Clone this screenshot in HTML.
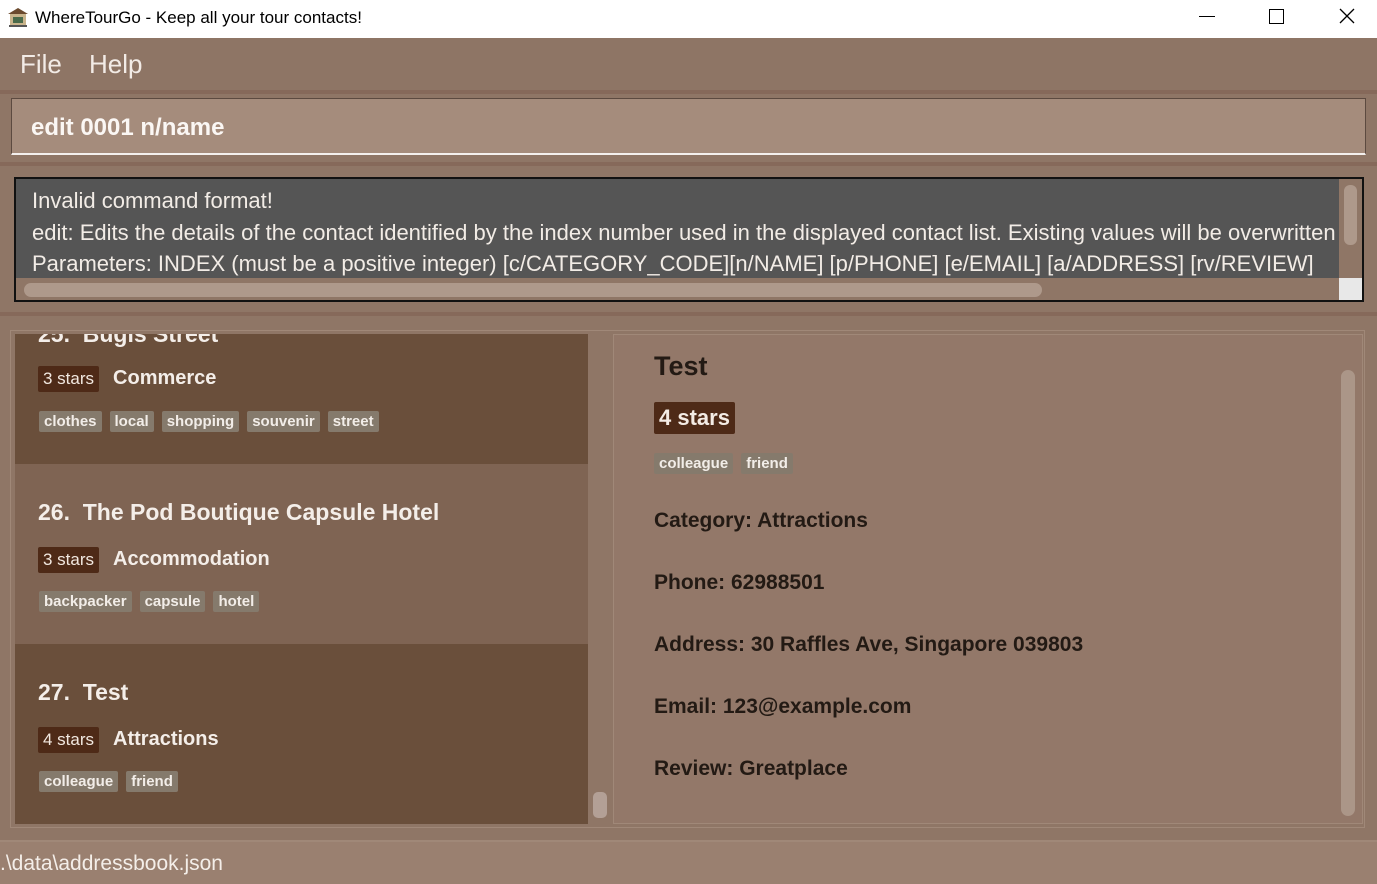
<!DOCTYPE html>
<html><head><meta charset="utf-8"><style>
*{margin:0;padding:0;box-sizing:border-box}
body{width:1377px;height:884px;overflow:hidden;background:#8f7666;font-family:"Liberation Sans",sans-serif;position:relative}
.abs{position:absolute}
.title{left:0;top:0;width:1377px;height:38px;background:#fff;color:#000;font-size:17px}
.menu{top:38px;left:0;width:1377px;height:52px;background:#8e7565;color:#f2ebe6;font-size:26px;font-weight:300}
.tag{display:inline-block;background:#857a6c;color:#f2ede8;font-size:15px;font-weight:bold;padding:2px 5px;border-radius:2px;margin-right:8px}
.star{display:inline-block;background:#4e2a17;color:#f2e8e0;font-size:17px;padding:3px 5px;border-radius:2px;margin-right:14px}
.card{left:15px;width:573px;color:#f4eee9}
.card .h{font-size:23px;font-weight:bold;position:absolute;left:23px}
.cat{font-size:20px;font-weight:bold}
.det{color:#231a14;font-size:21px;font-weight:bold;position:absolute;left:654px}
</style></head><body>
<div class="abs title">
<svg class="abs" style="left:7px;top:6px" width="22" height="22" viewBox="0 0 22 22"><path d="M1 8 L11 2 L21 8 Z" fill="#6b4a2e"/><rect x="3" y="8" width="16" height="11" fill="#c9b48c"/><rect x="6" y="11" width="10" height="6" fill="#4a6a4a"/><rect x="2" y="19" width="18" height="2" fill="#555"/></svg>
<span class="abs" style="left:35px;top:8px">WhereTourGo - Keep all your tour contacts!</span>
<span class="abs" style="left:1199px;top:16px;width:16px;height:1px;background:#000"></span>
<span class="abs" style="left:1269px;top:9px;width:15px;height:15px;border:1.5px solid #000"></span>
<svg class="abs" style="left:1339px;top:8px" width="16" height="16" viewBox="0 0 16 16"><path d="M1 1L15 15M15 1L1 15" stroke="#000" stroke-width="1.3"/></svg>
</div>
<div class="abs menu"><span class="abs" style="left:20px;top:11px">File</span><span class="abs" style="left:89px;top:11px">Help</span></div>
<div class="abs" style="left:0;top:90px;width:1377px;height:4px;background:#86695a"></div>
<div class="abs" style="left:11px;top:98px;width:1355px;height:57px;background:#a58c7c;border:1px solid #5c4a40;border-bottom:2px solid #f4f0ee"></div>
<span class="abs" style="left:31px;top:114px;font-size:24px;font-weight:bold;color:#fbf7f4">edit 0001 n/name</span>
<div class="abs" style="left:0;top:162px;width:1377px;height:4px;background:#86695a"></div>
<div class="abs" style="left:14px;top:177px;width:1350px;height:125px;background:#555;border:2px solid #111;overflow:hidden">
<div style="color:#f2ece6;font-size:22px;font-weight:300;line-height:31.5px;white-space:nowrap;padding:6px 0 0 16px;width:1322px;overflow:hidden">Invalid command format!<br>edit: Edits the details of the contact identified by the index number used in the displayed contact list. Existing values will be overwritten<br>Parameters: INDEX (must be a positive integer) [c/CATEGORY_CODE][n/NAME] [p/PHONE] [e/EMAIL] [a/ADDRESS] [rv/REVIEW]</div>
<div class="abs" style="left:0;top:99px;width:1323px;height:22px;background:#8f7666"></div>
<div class="abs" style="left:8px;top:104px;width:1018px;height:14px;background:#ae998b;border-radius:7px"></div>
<div class="abs" style="left:1323px;top:0;width:23px;height:99px;background:#8f7666"></div>
<div class="abs" style="left:1328px;top:6px;width:13px;height:60px;background:#ae998b;border-radius:6px"></div>
<div class="abs" style="left:1323px;top:99px;width:23px;height:22px;background:#e8e8e8"></div>
</div>
<div class="abs" style="left:0;top:312px;width:1377px;height:4px;background:#86695a"></div>
<div class="abs" style="left:10px;top:330px;width:1355px;height:498px;border:1px solid #a08878"></div>
<!-- list -->
<div class="abs card" style="top:334px;height:130px;background:#6a4f3b;overflow:hidden">
<div class="h" style="top:-13px">25.&nbsp; Bugis Street</div>
<div class="abs" style="left:23px;top:32px"><span class="star">3 stars</span><span class="cat">Commerce</span></div>
<div class="abs" style="left:24px;top:77px"><span class="tag">clothes</span><span class="tag">local</span><span class="tag">shopping</span><span class="tag">souvenir</span><span class="tag">street</span></div>
</div>
<div class="abs card" style="top:464px;height:180px;background:#7f6453">
<div class="h" style="top:35px">26.&nbsp; The Pod Boutique Capsule Hotel</div>
<div class="abs" style="left:23px;top:83px"><span class="star">3 stars</span><span class="cat">Accommodation</span></div>
<div class="abs" style="left:24px;top:127px"><span class="tag">backpacker</span><span class="tag">capsule</span><span class="tag">hotel</span></div>
</div>
<div class="abs card" style="top:644px;height:180px;background:#6a4f3b">
<div class="h" style="top:35px">27.&nbsp; Test</div>
<div class="abs" style="left:23px;top:83px"><span class="star">4 stars</span><span class="cat">Attractions</span></div>
<div class="abs" style="left:24px;top:127px"><span class="tag">colleague</span><span class="tag">friend</span></div>
</div>
<div class="abs" style="left:588px;top:334px;width:24px;height:490px;background:#8f7666"></div>
<div class="abs" style="left:593px;top:792px;width:14px;height:26px;background:#b3a096;border-radius:5px"></div>
<!-- detail -->
<div class="abs" style="left:613px;top:334px;width:750px;height:490px;background:#937869;border:1px solid #a08878"></div>
<div class="abs" style="left:1341px;top:370px;width:14px;height:446px;background:#ab9688;border-radius:7px"></div>
<div class="det" style="top:351px;font-size:27px">Test</div>
<div class="abs" style="left:654px;top:402px;background:#4e2a17;color:#f4ece5;font-size:22px;font-weight:bold;padding:3px 5px;border-radius:2px">4 stars</div>
<div class="abs" style="left:654px;top:453px"><span class="tag">colleague</span><span class="tag">friend</span></div>
<div class="det" style="top:509px">Category: Attractions</div>
<div class="det" style="top:571px">Phone: 62988501</div>
<div class="det" style="top:633px">Address: 30 Raffles Ave, Singapore 039803</div>
<div class="det" style="top:695px">Email: 123@example.com</div>
<div class="det" style="top:757px">Review: Greatplace</div>
<div class="abs" style="left:0;top:840px;width:1377px;height:2px;background:#a08878"></div>
<div class="abs" style="left:0;top:842px;width:1377px;height:42px;background:#9a8070"></div>
<span class="abs" style="left:0;top:852px;font-size:21px;font-weight:300;color:#f4eee9">.\data\addressbook.json</span>
</body></html>
